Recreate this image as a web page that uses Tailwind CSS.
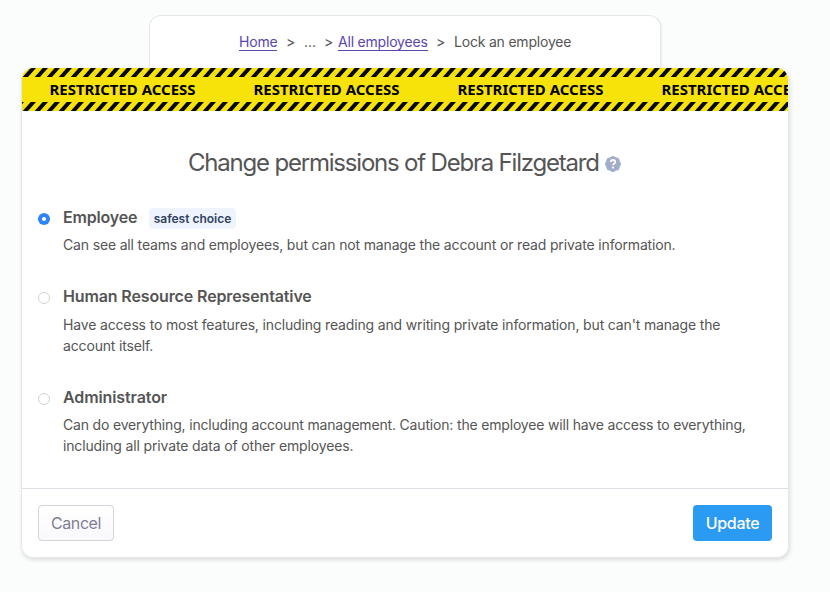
<!DOCTYPE html>
<html lang="en">
<head>
<meta charset="utf-8">
<title>Change permissions</title>
<script src="https://cdn.jsdelivr.net/npm/@tailwindcss/browser@4"></script>
</head>
<body class="h-[592px] overflow-hidden bg-[#fbfdfc] pl-[21px] pt-[15px] font-['Inter',sans-serif] text-[#555] antialiased">
<nav class="ml-32 flex h-[53px] w-[512px] rounded-t-xl border border-b-0 border-[#e6e8e8] bg-white pl-[89px] pt-[17px] text-[14px] leading-[18px] whitespace-nowrap shadow-[1px_1px_2px_rgba(0,0,0,0.06)]">
  <a class="h-[18px] w-[38px] border-b border-[#5a45b0] text-[#5a45b0]"><span class="tracking-[-0.2px]">Home</span></a>
  <span class="ml-[9px] w-[18px]">&gt;</span><span class="w-[20px]">...</span><span class="w-[14px]">&gt;</span>
  <a class="h-[18px] w-[90px] border-b border-[#5a45b0] text-[#5a45b0]"><span class="tracking-[-0.2px]">All employees</span></a>
  <span class="ml-[8px] w-[18px]">&gt;</span><span class="tracking-[-0.2px]">Lock an employee</span>
</nav>
<main class="relative h-[490px] w-[768px] overflow-hidden rounded-xl border border-t-0 border-[#e6e8e8] bg-white shadow-[1px_2px_4px_rgba(0,0,0,0.13)]">
  <svg class="block h-[43px] w-[766px]" viewBox="0 0 766 43">
    <defs>
      <pattern id="hazard" width="12" height="43" patternUnits="userSpaceOnUse">
        <path d="M.7 9L8.7 0H14L6 9ZM-11.3 9L-3.3 0H2L-6 9ZM.7 43L8.7 34H14L6 43ZM-11.3 43L-3.3 34H2L-6 43Z" fill="#07070f"/>
      </pattern>
    </defs>
    <rect width="766" height="43" fill="#f7e209"/>
    <rect width="766" height="43" fill="url(#hazard)"/>
    <g class="font-['Noto_Sans',sans-serif] text-[15px] font-bold" fill="#000">
      <text x="27.5" y="27" textLength="146" lengthAdjust="spacingAndGlyphs">RESTRICTED ACCESS</text>
      <text x="231.5" y="27" textLength="146" lengthAdjust="spacingAndGlyphs">RESTRICTED ACCESS</text>
      <text x="435.5" y="27" textLength="146" lengthAdjust="spacingAndGlyphs">RESTRICTED ACCESS</text>
      <text x="639.5" y="27" textLength="146" lengthAdjust="spacingAndGlyphs">RESTRICTED ACCESS</text>
    </g>
  </svg>
  <h1 class="flex h-[93px] items-start pl-[166px] pt-[36px] text-[24px] leading-[32px] whitespace-nowrap">
    <span class="w-[417px] tracking-[-1.2px]">Change permissions of Debra Filzgetard</span>
    <svg class="mt-[9px] size-4 scale-[1.25]" viewBox="0 0 20 20"><path fill="#a3adcb" fill-rule="evenodd" clip-rule="evenodd" d="M6.267 3.455a3.066 3.066 0 001.745-.723 3.066 3.066 0 013.976 0 3.066 3.066 0 001.745.723 3.066 3.066 0 012.812 2.812c.051.643.304 1.254.723 1.745a3.066 3.066 0 010 3.976 3.066 3.066 0 00-.723 1.745 3.066 3.066 0 01-2.812 2.812 3.066 3.066 0 00-1.745.723 3.066 3.066 0 01-3.976 0 3.066 3.066 0 00-1.745-.723 3.066 3.066 0 01-2.812-2.812 3.066 3.066 0 00-.723-1.745 3.066 3.066 0 010-3.976 3.066 3.066 0 00.723-1.745 3.066 3.066 0 012.812-2.812Z"/><path d="M7.8 8C7.8 5.4 12.2 5.4 12.2 8C12.2 9.6 10 9.7 10 11.3" fill="none" stroke="#fff" stroke-width="1.9"/><circle cx="10" cy="13.6" r="1.1" fill="#fff"/></svg>
  </h1>
  <section class="flex h-[79px] pl-4">
    <span class="mt-[9px] mr-[13px] flex size-3 items-center justify-center rounded-full bg-[#2f83fb]"><i class="size-1 rounded-full bg-white"></i></span>
    <div class="whitespace-nowrap">
      <h2 class="flex h-[26px] text-[16px] leading-[26px] font-semibold"><span class="w-[86px] tracking-[-0.2px]">Employee</span><span class="mt-[4px] h-[21px] w-[87px] rounded bg-[#eff3fb] text-center text-[12px] leading-[21px] text-[#2f4365]">safest choice</span></h2>
      <p class="mt-[4px] text-[14px] leading-[21px] tracking-[-0.16px]">Can see all teams and employees, but can not manage the account or read private information.</p>
    </div>
  </section>
  <section class="flex h-[101px] pl-4">
    <span class="mt-[9px] mr-[13px] size-3 rounded-full border border-[#d3d3d3] bg-white"></span>
    <div class="whitespace-nowrap">
      <h2 class="h-[26px] text-[16px] leading-[26px] font-semibold tracking-[-0.13px]">Human Resource Representative</h2>
      <p class="mt-[5px] text-[14px] leading-[21px] tracking-[-0.155px]">Have access to most features, including reading and writing private information, but can't manage the<br>account itself.</p>
    </div>
  </section>
  <section class="flex h-[104px] pl-4">
    <span class="mt-[9px] mr-[13px] size-3 rounded-full border border-[#d3d3d3] bg-white"></span>
    <div class="whitespace-nowrap">
      <h2 class="h-[26px] text-[16px] leading-[26px] font-semibold tracking-[-0.1px]">Administrator</h2>
      <p class="mt-[4px] text-[14px] leading-[21px] tracking-[-0.175px]">Can do everything, including account management. Caution: the employee will have access to everything,<br><span class="tracking-[-0.15px]">including all private data of other employees.</span></p>
    </div>
  </section>
  <footer class="flex h-[69px] justify-between border-t border-[#dce0e6] px-4 pt-4 text-[16px]">
    <button class="h-9 w-[76px] rounded border border-[#d3d4dc] bg-linear-to-b from-white to-[#f9f9fd] tracking-[-0.4px] text-[#807c94]">Cancel</button>
    <button class="h-9 w-[79px] rounded bg-[#2b9af3] font-medium tracking-[-0.3px] text-white">Update</button>
  </footer>
</main>
</body>
</html>
